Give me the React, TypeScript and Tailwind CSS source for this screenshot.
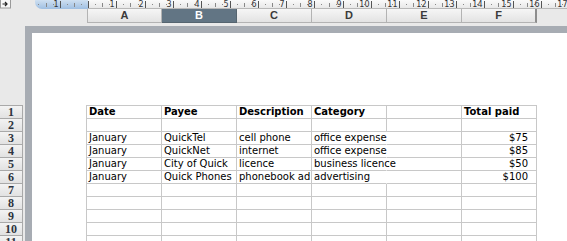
const COLS = ["A", "B", "C", "D", "E", "F"];

const ROWS: string[][] = [
  ["Date", "Payee", "Description", "Category", "", "Total paid"],
  ["", "", "", "", "", ""],
  ["January", "QuickTel", "cell phone", "office expense", "", "$75"],
  ["January", "QuickNet", "internet", "office expense", "", "$85"],
  ["January", "City of Quick", "licence", "business licence", "", "$50"],
  ["January", "Quick Phones", "phonebook ad", "advertising", "", "$100"],
  ["", "", "", "", "", ""],
  ["", "", "", "", "", ""],
  ["", "", "", "", "", ""],
  ["", "", "", "", "", ""],
  ["", "", "", "", "", ""],
];

function Ruler() {
  const cm = 28.3;
  const origin = 88;
  const ticks: JSX.Element[] = [];
  for (let q = -8; q <= 70; q++) {
    const x = origin + (q * cm) / 4;
    if (x < 36 || x > 567) continue;
    const major = q % 4 === 0;
    const half = Math.abs(q % 4) === 2;
    ticks.push(
      <rect
        key={q}
        x={Math.round(x)}
        y={major ? 1 : half ? 3 : 4}
        width={1}
        height={major ? 7 : half ? 4 : 1}
        fill={major ? "#555" : "#888"}
      />
    );
  }
  const labels: JSX.Element[] = [];
  for (let n = -1; n <= 17; n++) {
    if (n === 0) continue;
    const x = origin + n * cm;
    labels.push(
      <text
        key={n}
        x={Math.round(x) - 1.5}
        y={7}
        fontSize={8}
        textAnchor="end"
        fill="#333"
        fontFamily="'DejaVu Sans', sans-serif"
      >
        {Math.abs(n)}
      </text>
    );
  }
  return (
    <svg width={567} height={9} className="block">
      <rect x={0} y={0} width={567} height={9} fill="#e9e9e9" />
      <rect x={0.5} y={-1} width={10} height={9} fill="#f7f7f7" stroke="#9a9a9a" />
      <path d="M2.5 4h4M5 2l2 2-2 2" stroke="#222" strokeWidth={1.2} fill="none" />
      <defs>
        <linearGradient id="blue" x1="0" y1="0" x2="0" y2="1">
          <stop offset="0" stopColor="#cfe0f1" />
          <stop offset="1" stopColor="#9fbfe2" />
        </linearGradient>
        <linearGradient id="light" x1="0" y1="0" x2="0" y2="1">
          <stop offset="0" stopColor="#fafafa" />
          <stop offset="1" stopColor="#e6e6e6" />
        </linearGradient>
      </defs>
      <path d="M35 0H88V9H42A7 7 0 0 1 35 2Z" fill="url(#blue)" />
      <rect x={88} y={0} width={479} height={9} fill="url(#light)" />
      <rect x={88} y={8} width={479} height={1} fill="#b8b8b8" />
      {ticks}
      {labels}
    </svg>
  );
}

export default function App() {
  return (
    <div className="w-[567px] h-[241px] overflow-hidden bg-[#e9e9e9] font-['DejaVu_Sans',sans-serif]">
      <Ruler />

      {/* Column headers */}
      <div className="flex h-[14px]">
        <div className="w-[87px] shrink-0" />
        {COLS.map((c) => (
          <div
            key={c}
            className={`w-[75px] shrink-0 flex items-center justify-center border-r border-b text-[11px] leading-none font-semibold font-['Liberation_Sans',sans-serif] ${
              c === "B"
                ? "bg-[#627584] text-white border-[#55646f]"
                : "bg-gradient-to-b from-[#f6f6f6] to-[#e3e3e3] text-[#3a3a3a] border-[#b3b3b3]"
            } ${c === "A" ? "border-l border-l-[#b3b3b3]" : ""} ${
              c === "F" ? "border-r-[#8d8d8d] border-r-2" : ""
            }`}
          >
            {c}
          </div>
        ))}
        <div className="flex-1" />
      </div>

      <div className="flex">
        {/* Row headers */}
        <div className="w-[25px] shrink-0 pt-[82px]">
          <div className="w-[23px] border-t border-[#a9a9a9]">
            {ROWS.map((_, i) => (
              <div
                key={i}
                className="h-[13px] border-b border-r border-[#a9a9a9] bg-gradient-to-b from-[#f3f3f3] to-[#e2e2e2] flex items-center justify-center text-[12px] leading-[12px] font-bold text-[#2e3440] font-['Liberation_Serif',serif]"
              >
                {i + 1}
              </div>
            ))}
          </div>
        </div>

        {/* Page */}
        <div className="flex-1 mt-[3px] h-[300px] border-l-[7px] border-t-[7px] border-[#a7acb3] bg-white pl-[54px] pt-[72px]">
          <div className="grid grid-cols-[75px_75px_75px_75px_75px_75px] w-max border-t border-l border-[#c8c8c8] text-[10px] leading-[12px] text-black">
            {ROWS.map((row, r) =>
              row.map((cell, c) => {
                const overflow = c === 3 && r >= 2 && r <= 5;
                return (
                  <div
                    key={`${r}-${c}`}
                    className={`h-[13px] border-b border-r whitespace-nowrap pl-[2px] ${
                      overflow ? "border-r-transparent overflow-visible border-b-[#c8c8c8]" : "overflow-hidden border-[#c8c8c8]"
                    } ${r === 0 ? "font-bold" : ""} ${c === 5 && r > 0 ? "text-right pr-[8px]" : ""}`}
                  >
                    {cell}
                  </div>
                );
              })
            )}
          </div>
        </div>
      </div>
    </div>
  );
}
